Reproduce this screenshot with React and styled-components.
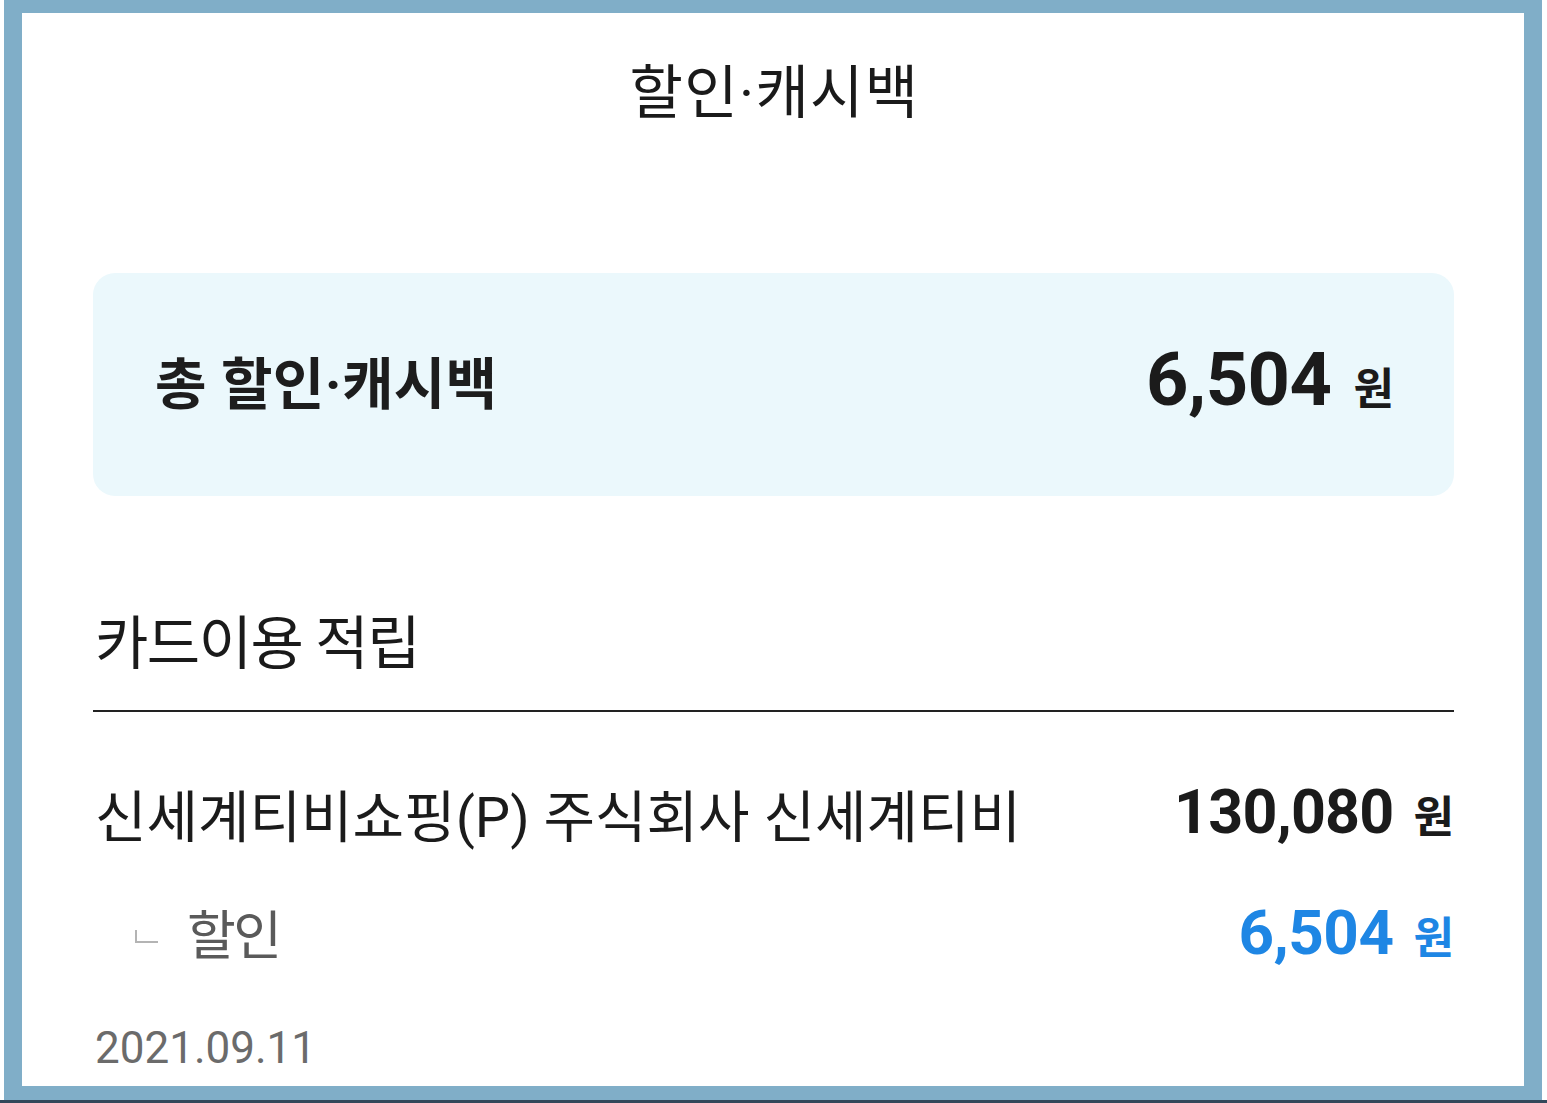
import styled, { createGlobalStyle } from 'styled-components'

const GlobalStyle = createGlobalStyle`
  html, body {
    margin: 0;
    padding: 0;
    background: #ffffff;
  }
  body {
    font-family: Roboto, "Noto Sans CJK KR", sans-serif;
    color: #1b1b1b;
  }
`

const Page = styled.div`
  width: 1547px;
  height: 1103px;
  display: flex;
  flex-direction: column;
  overflow: hidden;
`

const Frame = styled.div`
  margin-left: 4px;
  width: 1538px;
  height: 1100px;
  box-sizing: border-box;
  border-style: solid;
  border-color: #80aec8;
  border-width: 13px 18px 14px 18px;
  background: #ffffff;
  padding: 0 70px 0 73px;
  display: flex;
  flex-direction: column;
`

const BottomEdge = styled.div`
  height: 3px;
  background: #33475a;
`

const Header = styled.div`
  height: 150px;
  display: flex;
  align-items: center;
  justify-content: center;
  font-size: 58px;
  letter-spacing: 1.3px;
  color: #1a1a1a;
`

const SummaryCard = styled.div`
  margin-top: 110px;
  margin-left: -2px;
  height: 223px;
  box-sizing: border-box;
  border-radius: 22px;
  background: #ebf8fc;
  display: flex;
  align-items: center;
  justify-content: space-between;
  padding: 0 60px 10px 62px;
`

const SummaryLabel = styled.span`
  font-size: 56px;
  font-weight: 700;
  letter-spacing: 0.3px;
  color: #1d1d1d;
`

const Amount = styled.span`
  display: flex;
  align-items: baseline;
  gap: ${({ $gap }) => $gap}px;
  color: ${({ $color }) => $color || '#1b1b1b'};
`

const Number = styled.span`
  font-weight: 700;
  font-size: ${({ $size }) => $size}px;
  letter-spacing: ${({ $spacing }) => $spacing ?? -0.5}px;
`

const Won = styled.span`
  font-weight: 700;
  font-size: ${({ $size }) => $size}px;
`

const SectionTitle = styled.div`
  margin-top: 94px;
  margin-left: -2px;
  height: 122px;
  box-sizing: border-box;
  padding: 0 0 22px 2px;
  display: flex;
  align-items: center;
  border-bottom: 2px solid #222222;
  font-size: 58px;
  letter-spacing: -1.5px;
  color: #1a1a1a;
`

const Row = styled.div`
  margin-top: ${({ $top }) => $top}px;
  height: 100px;
  display: flex;
  align-items: center;
  justify-content: space-between;
`

const Merchant = styled.span`
  font-size: 56px;
  letter-spacing: 0;
  color: #1b1b1b;
`

const SubLabel = styled.span`
  display: flex;
  align-items: center;
  gap: 29px;
  padding-left: 40px;
  font-size: 53px;
  letter-spacing: -2.5px;
  color: #5a5a5a;
`

const Corner = styled.span`
  width: 23px;
  height: 13px;
  margin-top: 8px;
  border-left: 2px solid #b4b4b4;
  border-bottom: 2px solid #b4b4b4;
  box-sizing: border-box;
`

const DateText = styled.div`
  margin-top: 41px;
  height: 50px;
  display: flex;
  align-items: center;
  font-size: 44px;
  color: #6b6b6b;
`

export default function App() {
  return (
    <>
      <GlobalStyle />
      <Page>
        <Frame>
          <Header>할인·캐시백</Header>

          <SummaryCard>
            <SummaryLabel>총 할인·캐시백</SummaryLabel>
            <Amount $gap={22}>
              <Number $size={74}>6,504</Number>
              <Won $size={44}>원</Won>
            </Amount>
          </SummaryCard>

          <SectionTitle>카드이용 적립</SectionTitle>

          <Row $top={50}>
            <Merchant>신세계티비쇼핑(P) 주식회사 신세계티비</Merchant>
            <Amount $gap={20}>
              <Number $size={61} $spacing={-0.8}>130,080</Number>
              <Won $size={44}>원</Won>
            </Amount>
          </Row>

          <Row $top={20}>
            <SubLabel>
              <Corner />
              할인
            </SubLabel>
            <Amount $gap={20} $color="#1e86e4">
              <Number $size={62}>6,504</Number>
              <Won $size={44}>원</Won>
            </Amount>
          </Row>

          <DateText>2021.09.11</DateText>
        </Frame>
        <BottomEdge />
      </Page>
    </>
  )
}
